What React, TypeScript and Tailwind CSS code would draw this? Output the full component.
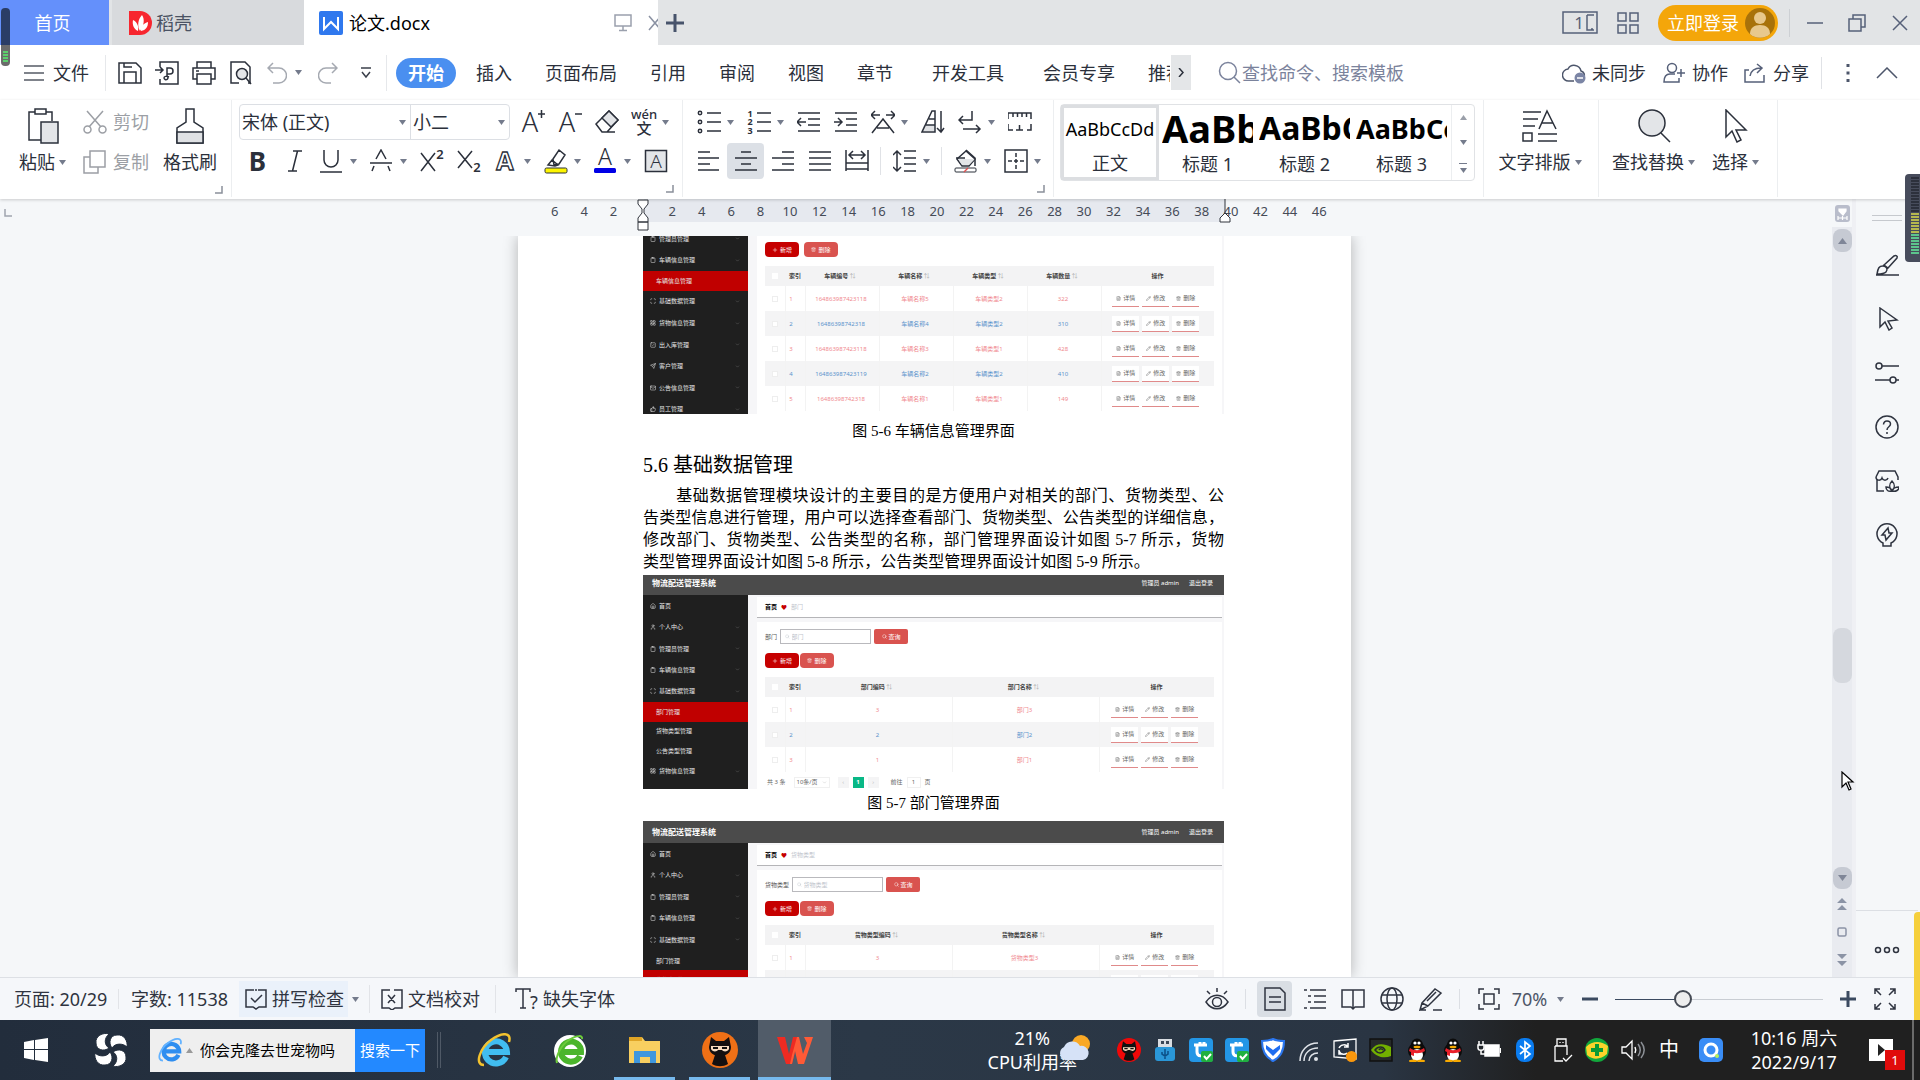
import type { ComponentType, ReactNode } from "react";
import {
  ChevronDown,
  Clipboard,
  FileText,
  Home,
  LayoutGrid,
  Mail,
  Pencil,
  Plus,
  Scan,
  Search,
  Send,
  SquareCheck,
  ThumbsUp,
  Trash2,
  User,
} from "lucide-react";

const UI_FONT = "font-['Noto_Sans','Noto_Sans_CJK_SC',sans-serif]";
const DOC_FONT = "font-['Liberation_Serif','Noto_Sans_CJK_SC',serif]";

/** Line-drawing wrapper: the view box always equals the drawn size. */
function Svg({
  w = 24,
  h = 24,
  className,
  children,
}: {
  w?: number;
  h?: number;
  className?: string;
  children: ReactNode;
}) {
  return (
    <svg
      viewBox={`0 0 ${w} ${h}`}
      width={w}
      height={h}
      fill="none"
      stroke="currentColor"
      strokeWidth={1.5}
      className={`shrink-0 ${className ?? ""}`}
      aria-hidden="true"
    >
      {children}
    </svg>
  );
}

function Caret({ className = "text-[#747b8c]" }: { className?: string }) {
  return (
    <Svg w={7} h={5} className={className}>
      <path d="M0 0h7L3.500 5z" fill="currentColor" stroke="none" />
    </Svg>
  );
}

/** Letter used as part of an icon. */
function Glyph({
  x,
  y,
  size = 24,
  weight = 300,
  children,
}: {
  x: number;
  y: number;
  size?: number;
  weight?: number;
  children: string;
}) {
  return (
    <text
      x={x}
      y={y}
      fontSize={size}
      fontWeight={weight}
      textAnchor="middle"
      fill="currentColor"
      stroke="none"
    >
      {children}
    </text>
  );
}

function Tool({
  label,
  menu,
  active,
  children,
}: {
  label: string;
  menu?: boolean;
  active?: boolean;
  children: ReactNode;
}) {
  return (
    <button type="button" aria-label={label} className="flex h-9 shrink-0 items-center">
      <span
        className={`flex h-9 w-[37px] items-center justify-center rounded-sm ${active ? "bg-[#dce0e6]" : ""}`}
      >
        {children}
      </span>
      {menu && (
        <span className="flex w-[13px]">
          <Caret />
        </span>
      )}
    </button>
  );
}

function Corner() {
  return (
    <div className="flex h-[14px] items-end justify-end pr-2 text-[#8a909b]">
      <Svg w={8} h={8}>
        <path d="M7 0v7H0" />
      </Svg>
    </div>
  );
}

/* ------------------------------------------------------------------ */
/* Window tabs                                                          */
/* ------------------------------------------------------------------ */

function TabBar() {
  return (
    <header className="flex h-[45px] shrink-0 bg-[#e2e4e6] text-lg">
      <button type="button" className="w-[109px] bg-[#6490fb] pr-1 text-white">
        首页
      </button>
      <button
        type="button"
        className="ml-[3px] flex w-[192px] items-center gap-1 bg-[#d8dadd] pl-[17px] text-[#4a5263]"
      >
        <Svg w={23} h={24}>
          <path d="M0 0h11a12 12 0 0 1 0 24H0z" fill="#f7262f" stroke="none" />
          <path
            d="M11 20C8 15 9 8 13 4c3 4 2 11-2 16zM9 20C5 18 3 14 4 9c4 2 6 6 5 11zM12 20c0-5 3-8 7-9 0 5-2 8-7 9z"
            fill="#fff"
            stroke="none"
          />
        </Svg>
        稻壳
      </button>
      <div className="flex w-[354px] items-center overflow-hidden bg-white pl-[15px]">
        <Svg w={24} h={24}>
          <rect width="24" height="24" rx="2" fill="#2f78ee" stroke="none" />
          <path d="M5 6v12l7-7 7 7V6" stroke="#fff" strokeWidth="2" />
        </Svg>
        <span className="ml-1.5 text-black">论文.docx</span>
        <Svg w={18} h={18} className="ml-auto text-[#9aa0ad]">
          <path d="M1 1h16v11H1zM9 12v4M5 16.500h8" />
        </Svg>
        <button type="button" aria-label="关闭标签" className="ml-4 w-[10px] overflow-hidden text-[#8b92a3]">
          <Svg w={14} h={16}>
            <path d="M1 1l12 14M13 1L1 15" />
          </Svg>
        </button>
      </div>
      <button type="button" aria-label="新建" className="ml-2 text-[#47536b]">
        <Svg w={18} h={18}>
          <path d="M9 0v18M0 9h18" strokeWidth="3" />
        </Svg>
      </button>
      <div className="ml-auto flex items-center pr-3 text-[#566079]">
        <Svg w={36} h={23}>
          <path d="M1 1h34v21H1zM25 4h7M25 4v15h7M29 18h2" />
          <Glyph x={17} y={18} size={17} weight={400}>
            1
          </Glyph>
        </Svg>
        <Svg w={22} h={22} className="ml-[19px]">
          <path d="M1 1h8v8H1zM13 1h8v8h-8zM1 13h8v8H1zM13 13h8v8h-8z" />
        </Svg>
        <button
          type="button"
          className="ml-[19px] flex h-9 items-center gap-1.5 rounded-full bg-[#f4a60a] pr-[3px] pl-[9px] text-white"
        >
          立即登录
          <Svg w={30} h={30}>
            <circle cx="15" cy="15" r="15" fill="#a8720a" stroke="none" />
            <circle cx="15" cy="10" r="6" fill="#e8c88c" stroke="none" />
            <path d="M5 26c0-6 4-9 10-9s10 3 10 9c-5 5-15 5-20 0z" fill="#e8c88c" stroke="none" />
          </Svg>
        </button>
        <span className="ml-[11px] h-7 w-px bg-[#cdd0d4]" />
        <button type="button" aria-label="最小化" className="ml-[17px]">
          <Svg w={16} h={18}>
            <path d="M0 9h16" />
          </Svg>
        </button>
        <button type="button" aria-label="还原" className="ml-[25px]">
          <Svg w={18} h={18}>
            <path d="M1 5h12v12H1zM5 5V1h12v12h-4" />
          </Svg>
        </button>
        <button type="button" aria-label="关闭" className="ml-[26px]">
          <Svg w={16} h={16}>
            <path d="M1 1l14 14M15 1L1 15" />
          </Svg>
        </button>
      </div>
    </header>
  );
}

/* ------------------------------------------------------------------ */
/* Menu row                                                             */
/* ------------------------------------------------------------------ */

const MENUS = ["插入", "页面布局", "引用", "审阅", "视图", "章节", "开发工具", "会员专享"];

function MenuRow() {
  return (
    <nav className="flex h-[55px] shrink-0 items-center bg-white text-lg text-[#2b303b]">
      <button type="button" className="flex items-center gap-[9px] pl-6">
        <Svg w={20} h={16} className="text-[#555b66]">
          <path d="M0 1h20M0 8h20M0 15h20" />
        </Svg>
        文件
      </button>
      <span className="ml-4 h-9 w-px bg-[#e6e8eb]" />
      <div className="ml-3 flex items-center gap-[13px]">
        <button type="button" aria-label="保存">
          <Svg>
            <path d="M1 2h17l5 5v15H1zM6 22V11h12v11M6 2v4h8" />
          </Svg>
        </button>
        <button type="button" aria-label="输出为PDF">
          <Svg>
            <path d="M5 6V1h18v22H5v-5M0 9h8M5 6l3 3-3 3" />
            <path d="M12 7h3a3 3 0 0 1 0 6h-3zM12 13v2a2 2 0 1 1-3 2c0-2 3-2 5-1" />
          </Svg>
        </button>
        <button type="button" aria-label="打印">
          <Svg>
            <path d="M5 7V1h14v6M5 18H1V7h22v11h-4M5 13h14v10H5z" />
            <path d="M4 10h3" />
          </Svg>
        </button>
        <button type="button" aria-label="打印预览">
          <Svg>
            <path d="M10 22H2V1h14l5 5v16h-2" />
            <circle cx="13" cy="13" r="5.500" fill="#e3e5e8" />
            <path d="M17 17l5 6" />
          </Svg>
        </button>
      </div>
      <div className="ml-3.5 flex items-center text-[#a5a9b1]">
        <button type="button" aria-label="撤销">
          <Svg w={20} h={22}>
            <path d="M6 1L1 6l5 5M1 6h11a7 7 0 0 1 0 15H6" />
          </Svg>
        </button>
        <span className="ml-2">
          <Caret />
        </span>
        <button type="button" aria-label="恢复" className="ml-4">
          <Svg w={20} h={22}>
            <path d="M14 1l5 5-5 5M19 6H8a7 7 0 0 0 0 15h5" />
          </Svg>
        </button>
        <Svg w={12} h={12} className="ml-[22px] text-[#3b404b]">
          <path d="M1 1h10M2 5l4 5 4-5" />
        </Svg>
      </div>
      <span className="ml-3.5 h-9 w-px bg-[#e6e8eb]" />
      <button
        type="button"
        className="ml-[9px] h-[30px] w-[60px] rounded-full bg-[#4a8ff0] text-lg leading-none font-bold text-white"
      >
        开始
      </button>
      <div className="ml-5 flex items-center gap-[33px]">
        {MENUS.map((m) => (
          <button key={m} type="button" className={m === "开发工具" ? "mx-1.5" : undefined}>
            {m}
          </button>
        ))}
        <button type="button" className="w-[22px] overflow-hidden text-left whitespace-nowrap">
          推荐
        </button>
      </div>
      <button
        type="button"
        aria-label="更多选项卡"
        className="ml-px flex h-[35px] w-5 items-center justify-center bg-[#e4e6e8]"
      >
        <Svg w={6} h={9}>
          <path d="M1 0l4 4.500L1 9" />
        </Svg>
      </button>
      <label className="ml-[27px] flex items-center text-[#7b839c]">
        <Svg w={24} h={24}>
          <circle cx="10" cy="10" r="8.500" />
          <path d="M16 16l6 6" />
        </Svg>
        <input
          aria-label="查找命令"
          placeholder="查找命令、搜索模板"
          className="w-[200px] bg-transparent outline-none placeholder:text-[#7b839c]"
        />
      </label>
      <div className="ml-auto flex items-center pr-[22px]">
        <button type="button" className="flex items-center gap-1.5">
          <Svg w={24} h={22} className="text-[#4d566b]">
            <path d="M12 19H7a6 6 0 0 1-1-12 7 7 0 0 1 13 2c3 1 4 3 3 6" />
            <circle cx="18" cy="16" r="5.500" fill="#7b85a5" stroke="none" />
            <path d="M15 16h6" stroke="#fff" />
          </Svg>
          未同步
        </button>
        <button type="button" className="ml-[17px] flex items-center gap-[7px]">
          <Svg w={22} h={22} className="text-[#566079]">
            <circle cx="9" cy="6" r="4.500" />
            <path d="M12 12H7c-4 0-6 3-6 8h15v-4M18 7v8M14 11h8" />
          </Svg>
          协作
        </button>
        <button type="button" className="ml-4 flex items-center gap-1.5">
          <Svg w={23} h={20} className="text-[#566079]">
            <path d="M5 7H1v12h19v-7M6 13c1-6 5-8 11-8M13 1l5 4-5 5" />
          </Svg>
          分享
        </button>
        <span className="ml-3 h-8 w-px bg-[#e0e2e6]" />
        <Svg w={4} h={20} className="ml-6 text-[#4d566b]">
          <path d="M2 1v3M2 8.500v3M2 16v3" strokeWidth="3" />
        </Svg>
        <button type="button" aria-label="收起功能区" className="ml-[26px] text-[#4d566b]">
          <Svg w={22} h={12}>
            <path d="M1 11L11 1l10 10" />
          </Svg>
        </button>
      </div>
    </nav>
  );
}

/* ------------------------------------------------------------------ */
/* Ribbon                                                               */
/* ------------------------------------------------------------------ */

function ClipboardGroup() {
  return (
    <section className="w-[232px] border-r border-[#eceef0]">
      <div className="flex h-20 pt-2 pl-[19px]">
        <button type="button" className="flex flex-col items-center gap-1">
          <Svg w={36} h={36}>
            <path d="M20 32H4V4h6M21 4h6v9M10 1h11v5H10z" />
            <path d="M16 14h17v21H16z" fill="#e3e5e8" />
          </Svg>
          <span className="flex items-center gap-1 leading-7">
            粘贴
            <Caret />
          </span>
        </button>
        <div className="ml-[17px] flex flex-col gap-3 text-[#9c9fa5]">
          <button type="button" className="flex h-7 items-center gap-1.5">
            <Svg w={24} h={24}>
              <path d="M4 1l14 16M20 1L6 17" />
              <circle cx="4.500" cy="19.500" r="3.500" />
              <circle cx="19.500" cy="19.500" r="3.500" />
            </Svg>
            剪切
          </button>
          <button type="button" className="flex h-7 items-center gap-1.5">
            <Svg w={24} h={24}>
              <path d="M7 1h15v16H7z" />
              <path d="M7 7H1v16h14v-6" />
            </Svg>
            复制
          </button>
        </div>
        <button type="button" className="ml-[14px] flex flex-col items-center gap-1">
          <Svg w={28} h={36}>
            <path d="M10 1h8v13l9 6v15H1V20l9-6z" />
            <path d="M1 24h26v11H1z" fill="#dfe1e4" />
          </Svg>
          <span className="leading-7">格式刷</span>
        </button>
      </div>
      <Corner />
    </section>
  );
}

function FontGroup() {
  return (
    <section className="w-[451px] border-r border-[#eceef0] pt-1 pl-[7px]">
      <div className="flex">
        <div className="flex h-9 rounded-sm border border-[#dcdfe4]">
          <label className="flex w-[171px] items-center border-r border-[#dcdfe4] pr-1">
            <select aria-label="字体" className="w-full appearance-none bg-transparent pl-0.5 outline-none">
              <option>宋体 (正文)</option>
            </select>
            <Caret />
          </label>
          <label className="flex w-[98px] items-center pr-1">
            <select aria-label="字号" className="w-full appearance-none bg-transparent pl-0.5 outline-none">
              <option>小二</option>
            </select>
            <Caret />
          </label>
        </div>
        <div className="ml-1 flex">
          <Tool label="增大字号">
            <Svg>
              <Glyph x={9} y={22} size={27}>
                A
              </Glyph>
              <path d="M17 4h7M20.500 0v8" />
            </Svg>
          </Tool>
          <Tool label="减小字号">
            <Svg>
              <Glyph x={9} y={22} size={27}>
                A
              </Glyph>
              <path d="M17 4h7" />
            </Svg>
          </Tool>
          <Tool label="清除格式">
            <Svg>
              <path d="M1 14L14 1l9 9-11 12H7zM7 22h13" />
              <path d="M7 8l7-7 9 9-7 7z" fill="#e3e5e8" />
            </Svg>
          </Tool>
          <Tool label="拼音指南" menu>
            <Svg w={26} h={28}>
              <Glyph x={13} y={11} size={13} weight={500}>
                wén
              </Glyph>
              <Glyph x={13} y={26} size={15} weight={500}>
                文
              </Glyph>
            </Svg>
          </Tool>
        </div>
      </div>
      <div className="mt-[3px] flex">
        <Tool label="加粗">
          <span className="text-[26px] leading-none font-bold">B</span>
        </Tool>
        <Tool label="倾斜">
          <Svg>
            <path d="M10 2h9M5 22h9M14.500 2l-5 20" />
          </Svg>
        </Tool>
        <Tool label="下划线" menu>
          <Svg>
            <path d="M4 1v10a7 7 0 0 0 14 0V1M0 23h22" />
          </Svg>
        </Tool>
        <Tool label="删除线" menu>
          <Svg>
            <path d="M6 10l5-9 5 9M0 14h22M4 17l-2 5M18 17l2 5" />
          </Svg>
        </Tool>
        <Tool label="上标">
          <Svg>
            <path d="M1 4l14 18M15 4L1 22" />
            <Glyph x={20} y={10} size={13} weight={600}>
              2
            </Glyph>
          </Svg>
        </Tool>
        <Tool label="下标">
          <Svg>
            <path d="M1 2l14 17M15 2L1 19" />
            <Glyph x={20} y={23} size={13} weight={600}>
              2
            </Glyph>
          </Svg>
        </Tool>
        <Tool label="文字效果" menu>
          <Svg>
            <text x="11" y="21" fontSize="25" fontWeight="700" textAnchor="middle" fill="#fff" strokeWidth="1.300">
              A
            </text>
          </Svg>
        </Tool>
        <Tool label="突出显示" menu>
          <Svg w={24} h={26}>
            <path d="M9 11l6-9 6 5-6 9-5 1zM8 12l6 5M4 17l4-5 6 5-3 1z" />
            <rect x="1" y="20" width="22" height="5" rx="1.500" fill="#fdf500" strokeWidth="1" />
          </Svg>
        </Tool>
        <Tool label="字体颜色" menu>
          <Svg w={24} h={26}>
            <Glyph x={11} y={17} size={23}>
              A
            </Glyph>
            <rect x="0" y="20" width="22" height="5" rx="1.500" fill="#0000e6" stroke="none" />
          </Svg>
        </Tool>
        <Tool label="字符底纹">
          <Svg>
            <path d="M1.500 1.500h21v21h-21z" fill="#e3e5e8" />
            <Glyph x={12} y={19} size={19}>
              A
            </Glyph>
          </Svg>
        </Tool>
      </div>
      <Corner />
    </section>
  );
}

function ParagraphGroup() {
  return (
    <section className="w-[371px] border-r border-[#eceef0] pt-1 pl-[7px]">
      <div className="flex">
        <Tool label="项目符号" menu>
          <Svg>
            <path d="M10 3h14M10 12h14M10 21h14" />
            <circle cx="3" cy="3" r="1.700" />
            <circle cx="3" cy="12" r="1.700" />
            <circle cx="3" cy="21" r="1.700" />
          </Svg>
        </Tool>
        <Tool label="编号" menu>
          <Svg>
            <path d="M10 3h14M10 12h14M10 21h14" />
            <Glyph x={3} y={7} size={9} weight={700}>
              1
            </Glyph>
            <Glyph x={3} y={15} size={9} weight={700}>
              2
            </Glyph>
            <Glyph x={3} y={24} size={9} weight={700}>
              3
            </Glyph>
          </Svg>
        </Tool>
        <Tool label="减少缩进量">
          <Svg>
            <path d="M1 3h22M11 9h12M11 15h12M1 21h22M0 12h9M4 8l-4 4 4 4" />
          </Svg>
        </Tool>
        <Tool label="增加缩进量">
          <Svg>
            <path d="M1 3h22M12 9h11M12 15h11M1 21h22M0 12h8M4 8l4 4-4 4" />
          </Svg>
        </Tool>
        <Tool label="中文版式" menu>
          <Svg>
            <path d="M0 5h9M4 1L0 5l4 4M15 5h9M20 1l4 4-4 4M1 23L12 9l11 14M6 18h12" />
          </Svg>
        </Tool>
        <Tool label="排序">
          <Svg>
            <path d="M3 15h11v6H1z" fill="#dfe1e4" stroke="none" />
            <path d="M11 1h3v21H1zM8 9h6M5 15h9M20 1v21M16 18l4 4 3-4" />
          </Svg>
        </Tool>
        <Tool label="显示段落标记" menu>
          <Svg>
            <path d="M14 1v9H1M5 6l-4 4 4 4M5 19h17M18 15l4 4-4 4" />
          </Svg>
        </Tool>
        <Tool label="制表位">
          <Svg>
            <path d="M0 9V3h23v6M5 3v4M9.500 3v4M14 3v4M18.500 3v4M0 14v6h5M23 14v6h-4M8 20h7M11.500 15v5" />
          </Svg>
        </Tool>
      </div>
      <div className="mt-[3px] flex items-center">
        <Tool label="左对齐">
          <Svg w={22} h={22}>
            <path d="M0 2h12M0 8h21M0 14h12M0 20h21" />
          </Svg>
        </Tool>
        <Tool label="居中对齐" active>
          <Svg w={22} h={22}>
            <path d="M6 2h10M0 8h22M6 14h10M0 20h22" />
          </Svg>
        </Tool>
        <Tool label="右对齐">
          <Svg w={22} h={22}>
            <path d="M10 2h12M0 8h22M10 14h12M0 20h22" />
          </Svg>
        </Tool>
        <Tool label="两端对齐">
          <Svg w={22} h={22}>
            <path d="M0 2h22M0 8h22M0 14h22M0 20h22" />
          </Svg>
        </Tool>
        <Tool label="分散对齐">
          <Svg>
            <path d="M1 1v21M23 1v21M4 6h16M8 2L4 6l4 4M16 2l4 4-4 4M1 14h22M1 20h22" />
          </Svg>
        </Tool>
        <span className="mx-[5px] h-7 w-px bg-[#e0e2e6]" />
        <Tool label="行距" menu>
          <Svg>
            <path d="M4 2v20M0 6l4-4 4 4M0 18l4 4 4-4M11 2h12M11 9h12M11 15h12M11 22h12" />
          </Svg>
        </Tool>
        <span className="mx-[5px] h-7 w-px bg-[#e0e2e6]" />
        <Tool label="底纹颜色" menu>
          <Svg>
            <path d="M3 10l9-8 9 8-6 7H8z" />
            <path d="M4 10h17l-6 6H8z" fill="#e3e5e8" stroke="none" />
            <path d="M2 9h9M12 1l9 8v8" />
            <rect x="1" y="19" width="21" height="4" rx="1" strokeWidth="1" />
            <path d="M10 23l4-4" stroke="#e05050" />
          </Svg>
        </Tool>
        <Tool label="边框" menu>
          <Svg>
            <path d="M1 1h22v22H1z" />
            <path d="M12 4v16M4 12h16" strokeDasharray="4 2" />
          </Svg>
        </Tool>
      </div>
      <Corner />
    </section>
  );
}

const STYLES = [
  { name: "标题 1", sample: "text-[38px]" },
  { name: "标题 2", sample: "text-[32px]" },
  { name: "标题 3", sample: "text-[27px]" },
];

function StylesGroup() {
  return (
    <section className="w-[430px] border-r border-[#eceef0] pt-1 pl-1.5">
      <div className="flex h-[77px] w-[415px] rounded-sm border border-[#e0e2e5]">
        <button
          type="button"
          className="flex w-[98px] shrink-0 flex-col items-center justify-between overflow-hidden border-[3px] border-[#dcdee1]"
        >
          <span className="flex h-11 items-center text-[18px] leading-none text-black">AaBbCcDd</span>
          <span className="leading-7">正文</span>
        </button>
        {STYLES.map((s) => (
          <button
            key={s.name}
            type="button"
            className="flex w-[97px] shrink-0 flex-col items-center overflow-hidden px-[3px] pt-px"
          >
            <span
              className={`flex h-11 w-full items-center overflow-hidden leading-none font-bold text-black ${s.sample}`}
            >
              AaBbCc
            </span>
            <span className="leading-7">{s.name}</span>
          </button>
        ))}
        <div className="ml-auto flex w-[23px] shrink-0 flex-col items-center border-l border-[#eceef0]">
          <button type="button" aria-label="上一行" className="flex flex-1 items-center">
            <Caret className="rotate-180 text-[#9a9fa9]" />
          </button>
          <button type="button" aria-label="下一行" className="flex flex-1 items-center">
            <Caret />
          </button>
          <button type="button" aria-label="其他样式" className="flex flex-1 flex-col items-center justify-center gap-1">
            <span className="h-px w-2 bg-[#747b8c]" />
            <Caret />
          </button>
        </div>
      </div>
    </section>
  );
}

function BigTool({ label, icon }: { label: string; icon: ReactNode }) {
  return (
    <button type="button" className="flex flex-col items-center gap-1">
      <span className="flex h-9 items-center">{icon}</span>
      <span className="flex items-center gap-1 leading-7">
        {label}
        <Caret />
      </span>
    </button>
  );
}

function Ribbon() {
  return (
    <div className="relative z-10 flex h-[99px] shrink-0 bg-white pb-0.5 text-lg text-[#2b303b] shadow-[0_1px_3px_rgba(0,0,0,0.18)]">
      <ClipboardGroup />
      <FontGroup />
      <ParagraphGroup />
      <StylesGroup />
      <section className="flex w-[115px] items-start justify-center border-r border-[#eceef0] pt-2 pr-0.5">
        <BigTool
          label="文字排版"
          icon={
            <Svg w={36} h={34}>
              <path d="M1 3h18M1 10h15M1 17h12M1 24h9v8H1zM16 25h19M16 32h19" />
              <path d="M17 20l8-18 9 18M20 14h11" />
            </Svg>
          }
        />
      </section>
      <section className="flex w-[179px] items-start gap-[17px] border-r border-[#eceef0] pt-2 pl-[13px]">
        <BigTool
          label="查找替换"
          icon={
            <Svg w={34} h={34}>
              <circle cx="15" cy="14" r="13" fill="#e3e5e8" />
              <path d="M24 24l9 9" />
            </Svg>
          }
        />
        <BigTool
          label="选择"
          icon={
            <Svg w={24} h={34}>
              <path d="M2 1v27l6-6 5 11 4-2-5-10h10z" />
            </Svg>
          }
        />
      </section>
    </div>
  );
}

/* ------------------------------------------------------------------ */
/* Ruler                                                                */
/* ------------------------------------------------------------------ */

const TICKS = Array.from({ length: 27 }, (_, i) => (i - 3) * 2);

function Ruler() {
  return (
    <div className="flex h-[37px] shrink-0 text-[13px] leading-[25px] text-[#454b57]">
      <Svg w={8} h={8} className="mt-[10px] ml-1 text-[#a0a5af]">
        <path d="M1 0v7h7" />
      </Svg>
      <div className="grid flex-1 justify-center pl-[30px]">
        <div className="col-start-1 row-start-1 ml-[104px] h-[23px] w-[581px] bg-[#e6e9ef]" />
        <div className="col-start-1 row-start-1 flex w-[794px]">
          {TICKS.map((t) => (
            <span key={t} className="flex flex-1 justify-center">
              {t === 0 ? (
                <Svg w={12} h={32} className="text-[#30343d]">
                  <path
                    d="M1 1h10v4l-4 5v4l4 5v4H1v-4l4-5v-4L1 5zM1 23h10v8H1z"
                    fill="#fff"
                    strokeWidth="1"
                  />
                </Svg>
              ) : (
                <span>{Math.abs(t)}</span>
              )}
            </span>
          ))}
        </div>
        <div className="col-start-1 row-start-1 ml-[679px] w-3">
          <Svg w={12} h={24} className="text-[#30343d]">
            <path d="M6 0v14M1 23v-4l5-5 5 5v4z" fill="#fff" strokeWidth="1" />
          </Svg>
        </div>
      </div>
    </div>
  );
}

/* ------------------------------------------------------------------ */
/* Figures in the document: logistics admin panels                      */
/* ------------------------------------------------------------------ */

type IconType = ComponentType<{ size?: number; className?: string }>;
type SideItem = { label: string; icon?: IconType; active?: boolean };

function SideMenu({ items, className }: { items: SideItem[]; className: string }) {
  return (
    <div className={`flex w-full flex-col text-[#e6e6e6] ${className}`}>
      {items.map(({ label, icon: Icon, active }) => (
        <div
          key={label + (active ? "-on" : "")}
          className={`flex items-center gap-[3px] pr-2 ${Icon ? "flex-[22] pl-[7px]" : "flex-[20] pl-[13px]"} ${
            active ? "bg-[#c00000]" : ""
          }`}
        >
          {Icon && <Icon size={6} />}
          <span>{label}</span>
          {Icon && label !== "首页" && <ChevronDown size={5} className="ml-auto text-[#777]" />}
        </div>
      ))}
    </div>
  );
}

function MiniButtons({ gap }: { gap: string }) {
  return (
    <div className={`flex ${gap} text-white`}>
      <button
        type="button"
        className="flex h-[15px] w-[34px] items-center justify-center gap-0.5 rounded bg-[#c60000]"
      >
        <Plus size={6} />
        新增
      </button>
      <button
        type="button"
        className="flex h-[15px] w-[34px] items-center justify-center gap-0.5 rounded bg-[#d9534f]"
      >
        <Trash2 size={5} />
        删除
      </button>
    </div>
  );
}

function MiniTable({ heads, rows, cols }: { heads: string[]; rows: string[][]; cols: string }) {
  return (
    <table className="mt-[9px] w-full table-fixed border-collapse text-center">
      <thead>
        <tr className="h-5 bg-[#f3f3f4] text-[#444]">
          <th className="w-5 p-0">
            <input
              type="checkbox"
              aria-label="全选"
              className="mx-auto block size-1.5 appearance-none bg-white"
            />
          </th>
          <th className="w-5 p-0">索引</th>
          {heads.map((h) => (
            <th key={h} className={`${cols} p-0 pr-1`}>
              {h} <span className="font-normal text-[#aaa]">⇅</span>
            </th>
          ))}
          <th className="p-0">操作</th>
        </tr>
      </thead>
      <tbody>
        {rows.map((row, i) => (
          <tr
            key={row.join()}
            className={`h-[25px] ${i % 2 ? "bg-[#f4f4f5] text-[#5b93cc]" : "bg-white text-[#f08a90]"}`}
          >
            <td className="p-0">
              <input
                type="checkbox"
                aria-label={`选择 ${row[0]}`}
                className="mx-auto block size-1.5 appearance-none border border-[#eee] bg-white"
              />
            </td>
            {row.map((cell, c) => (
              <td key={c} className={`border-x border-[#f3f3f3] p-0 ${c ? "pr-0.5" : "pr-2"}`}>
                {cell}
              </td>
            ))}
            <td className="p-0">
              <div className="flex justify-center gap-[3px] pr-1 text-[#666]">
                <button type="button" className="flex h-4 w-[27px] items-center justify-center gap-0.5 border-b border-[#e08a8a] bg-white">
                  <FileText size={5} />
                  详情
                </button>
                <button type="button" className="flex h-4 w-[27px] items-center justify-center gap-0.5 border-b border-[#e08a8a] bg-white">
                  <Pencil size={5} />
                  修改
                </button>
                <button type="button" className="flex h-4 w-[27px] items-center justify-center gap-0.5 border-b border-[#e08a8a] bg-white">
                  <Trash2 size={5} />
                  删除
                </button>
              </div>
            </td>
          </tr>
        ))}
      </tbody>
    </table>
  );
}

function AdminPanel({
  topic,
  menu,
  menuClass,
  headClass,
  className,
  inputId,
  children,
}: {
  topic: string;
  menu: SideItem[];
  menuClass: string;
  headClass: string;
  className: string;
  inputId: string;
  children: ReactNode;
}) {
  return (
    <div className={`flex flex-col overflow-hidden text-[6px] leading-none ${UI_FONT} ${className}`}>
      <div className={`flex shrink-0 items-center bg-[#4b4b4b] pr-[11px] pl-[9px] text-white ${headClass}`}>
        <span className="text-[8px] font-bold">物流配送管理系统</span>
        <span className="ml-auto">管理员 admin</span>
        <span className="ml-2.5">退出登录</span>
      </div>
      <div className="flex min-h-0 flex-1">
        <div className="w-[105px] shrink-0 overflow-hidden bg-[#1f1f1f]">
          <SideMenu items={menu} className={menuClass} />
        </div>
        <div className="flex flex-1 flex-col overflow-hidden bg-[#f6f6f8] pt-[2px] pr-[2px] pl-[9px]">
          <div className="flex h-[21px] shrink-0 items-center gap-1 border-b border-[#b5b5b8] bg-white px-2">
            <b>首页</b>
            <span className="text-[#c60000]">♥</span>
            <span className="text-[#c0c4cc]">{topic}</span>
          </div>
          <div className="mt-1 flex-1 bg-white px-2 pt-[7px]">
            <div className="mb-[9px] flex items-center gap-[3px]">
              <label htmlFor={inputId} className="text-[#555]">
                {topic}
              </label>
              <span className="flex h-[15px] w-[91px] items-center gap-0.5 border border-[#b9b9bd] px-1 text-[#c0c4cc]">
                <Search size={5} />
                <input
                  id={inputId}
                  placeholder={topic}
                  className="w-full bg-transparent outline-none placeholder:text-[#c0c4cc]"
                />
              </span>
              <button
                type="button"
                className="flex h-[15px] w-[34px] items-center justify-center gap-0.5 rounded-xs bg-[#d9534f] text-white"
              >
                <Search size={5} />
                查询
              </button>
            </div>
            <MiniButtons gap="gap-px" />
            {children}
          </div>
        </div>
      </div>
    </div>
  );
}

const VEHICLE_MENU: SideItem[] = [
  { label: "管理员管理", icon: Clipboard },
  { label: "车辆信息管理", icon: Clipboard },
  { label: "车辆信息管理", active: true },
  { label: "基础数据管理", icon: Scan },
  { label: "货物信息管理", icon: LayoutGrid },
  { label: "出入库管理", icon: SquareCheck },
  { label: "客户管理", icon: Send },
  { label: "公告信息管理", icon: Mail },
  { label: "员工管理", icon: ThumbsUp },
];

const BASE_MENU: SideItem[] = [
  { label: "首页", icon: Home },
  { label: "个人中心", icon: User },
  { label: "管理员管理", icon: Clipboard },
  { label: "车辆信息管理", icon: Clipboard },
  { label: "基础数据管理", icon: Scan },
];

const DEPT_MENU: SideItem[] = [
  ...BASE_MENU,
  { label: "部门管理", active: true },
  { label: "货物类型管理" },
  { label: "公告类型管理" },
  { label: "货物信息管理", icon: LayoutGrid },
];

const GOODS_MENU: SideItem[] = [
  ...BASE_MENU,
  { label: "部门管理" },
  { label: "货物类型管理", active: true },
  { label: "公告类型管理" },
  { label: "货物信息管理", icon: LayoutGrid },
];

function VehicleFigure() {
  return (
    <div className={`flex h-[178px] shrink-0 overflow-hidden text-[6px] leading-none ${UI_FONT}`}>
      <div className="flex w-[105px] shrink-0 flex-col bg-[#1f1f1f]">
        <SideMenu items={VEHICLE_MENU} className="-mt-2 h-[192px] shrink-0" />
      </div>
      <div className="flex-1 bg-[#f6f6f8] pr-[2px] pl-[9px]">
        <div className="h-full bg-white px-2 pt-1.5">
          <MiniButtons gap="gap-[5px]" />
          <MiniTable
            cols="w-[74px]"
            heads={["车辆编号", "车辆名称", "车辆类型", "车辆数量"]}
            rows={[
              ["1", "164863987423118", "车辆名称5", "车辆类型2", "322"],
              ["2", "16486398742318", "车辆名称4", "车辆类型2", "310"],
              ["3", "164863987423118", "车辆名称3", "车辆类型1", "428"],
              ["4", "164863987423119", "车辆名称2", "车辆类型2", "410"],
              ["5", "16486398742318", "车辆名称1", "车辆类型1", "149"],
            ]}
          />
        </div>
      </div>
    </div>
  );
}

function Pagination() {
  return (
    <div className="mt-1 flex h-3 items-center pl-0.5 text-[#666]">
      <span>共 3 条</span>
      <span className="ml-2 flex h-[11px] w-9 items-center justify-center gap-1 border border-[#f0f0f0]">
        10条/页
        <ChevronDown size={5} className="text-[#bbb]" />
      </span>
      <button type="button" aria-label="上一页" className="ml-2 size-[11px] bg-[#f4f4f5] text-[#bbb]">
        ‹
      </button>
      <button type="button" className="ml-1 size-[11px] bg-[#09b886] font-bold text-white">
        1
      </button>
      <button type="button" aria-label="下一页" className="ml-1 size-[11px] bg-[#f4f4f5] text-[#bbb]">
        ›
      </button>
      <span className="ml-3">前往</span>
      <span className="mx-1 flex h-[11px] w-3.5 items-center justify-center border border-[#f0f0f0]">1</span>
      <span>页</span>
    </div>
  );
}

const LINES = [
  "\u3000\u3000基础数据管理模块设计的主要目的是方便用户对相关的部门、货物类型、公",
  "告类型信息进行管理，用户可以选择查看部门、货物类型、公告类型的详细信息，",
  "修改部门、货物类型、公告类型的名称，部门管理界面设计如图 5-7 所示，货物",
];

function Page() {
  return (
    <article
      className={`w-[833px] shrink-0 overflow-hidden bg-white pr-[127px] pl-[125px] text-black shadow-[0_0_14px_rgba(0,0,0,0.28)] ${DOC_FONT}`}
    >
      <VehicleFigure />
      <p className="text-center text-[15px] leading-[34px]">图 5-6 车辆信息管理界面</p>
      <h2 className="text-xl leading-[34px]">5.6 基础数据管理</h2>
      <p className="mt-[3px] mb-0.5 text-base leading-[22px]">
        {LINES.map((l) => (
          <span key={l} className="block whitespace-nowrap [text-align-last:justify]">
            {l}
          </span>
        ))}
        <span className="block">类型管理界面设计如图 5-8 所示，公告类型管理界面设计如图 5-9 所示。</span>
      </p>
      <AdminPanel
        topic="部门"
        inputId="dept"
        menu={DEPT_MENU}
        menuClass="h-[187px]"
        headClass="h-5 pb-1"
        className="h-[214px]"
      >
        <MiniTable
          cols="w-[147px]"
          heads={["部门编码", "部门名称"]}
          rows={[
            ["1", "3", "部门3"],
            ["2", "2", "部门2"],
            ["3", "1", "部门1"],
          ]}
        />
        <Pagination />
      </AdminPanel>
      <p className="text-center text-[15px] leading-7">图 5-7 部门管理界面</p>
      <AdminPanel
        topic="货物类型"
        inputId="goods"
        menu={GOODS_MENU}
        menuClass="h-[188px]"
        headClass="h-[22px]"
        className="mt-1 h-[214px]"
      >
        <MiniTable
          cols="w-[147px]"
          heads={["货物类型编码", "货物类型名称"]}
          rows={[
            ["1", "3", "货物类型3"],
            ["2", "2", "货物类型2"],
          ]}
        />
      </AdminPanel>
    </article>
  );
}

/* ------------------------------------------------------------------ */
/* Scroll bar and side rail                                             */
/* ------------------------------------------------------------------ */

function ScrollBar() {
  return (
    <div className="flex w-6 shrink-0 flex-col items-center border-r-4 border-[#eff0f4] bg-[#e9ebf0] text-[#7f8697]">
      <div className="flex h-7 w-full shrink-0 items-center justify-center bg-[#f5f7f9]">
        <Svg w={15} h={17}>
          <rect width="15" height="17" rx="3" fill="#b9bdcb" stroke="none" />
          <path d="M4 4h7v2l-3 4-4-4zM3 13h9M3 11v4M12 11v4M7.500 11v4" fill="#fff" stroke="#fff" strokeWidth="1.200" />
        </Svg>
      </div>
      <button
        type="button"
        aria-label="向上滚动"
        className="mt-0.5 flex h-[23px] w-[19px] shrink-0 items-center justify-center rounded-lg bg-[#c6cad3]"
      >
        <Svg w={9} h={6}>
          <path d="M0 6l4.500-6L9 6z" fill="currentColor" stroke="none" />
        </Svg>
      </button>
      <div className="flex-[375]" />
      <div className="h-[55px] w-[19px] shrink-0 rounded-lg bg-[#d5d8de]" />
      <div className="flex-[184]" />
      <button
        type="button"
        aria-label="向下滚动"
        className="flex h-[22px] w-[19px] shrink-0 items-center justify-center rounded-lg bg-[#c6cad3]"
      >
        <Svg w={9} h={6}>
          <path d="M0 0l4.500 6L9 0z" fill="currentColor" stroke="none" />
        </Svg>
      </button>
      <div className="flex shrink-0 flex-col items-center gap-[17px] pt-[9px] pb-[11px] text-[#8b93a5]">
        <Svg w={10} h={12}>
          <path d="M0 5l5-5 5 5zM0 12l5-5 5 5z" fill="currentColor" stroke="none" />
        </Svg>
        <Svg w={10} h={10}>
          <rect x="1" y="1" width="8" height="8" rx="1.500" />
        </Svg>
        <Svg w={10} h={12}>
          <path d="M0 0l5 5 5-5zM0 7l5 5 5-5z" fill="currentColor" stroke="none" />
        </Svg>
      </div>
    </div>
  );
}

function SideRail() {
  return (
    <aside className="flex w-16 shrink-0 flex-col items-center pr-0.5 text-[#2f3440]">
      <div className="mt-4 h-1.5 w-[30px] border-y border-[#c6c9ce]" />
      <div className="mt-8 flex flex-col items-center gap-[30px]">
        <Svg>
          <path d="M1 22h23M9 12l10-9c2-1 4 0 3 2l-9 10zM2 21c1-6 2-8 6-8s5 4 3 6-4 2-9 2z" />
        </Svg>
        <Svg>
          <path d="M5 1l17 12-9 1 4 7-3 2-4-8-5 5z" />
        </Svg>
        <Svg>
          <circle cx="4" cy="5" r="3" />
          <circle cx="18" cy="19" r="3" />
          <path d="M7 5h17M0 19h15M21 19h3" />
        </Svg>
        <Svg>
          <circle cx="12" cy="12" r="11" />
          <path d="M8.500 9.500c0-5 7-4 7-.5 0 3-3.500 2.500-3.500 6M12 17v2" />
        </Svg>
        <Svg>
          <path d="M2 11v11h7M1 8l3-6h16l3 6v3M1 8c0 4 5 4 6 1 1 3 5 3 6 0" />
          <path d="M17 22c-3-3-3-7 0-10 3 3 3 7 0 10zM17 22c-4 1-6-1-6-4 3 0 5 1 6 4zM17 22c4 1 7-1 7-4-4 0-6 1-7 4z" />
        </Svg>
        <Svg>
          <path d="M8 20a10 10 0 1 1 8 0v3H8z" />
          <path d="M13 5l-6 7h3l1 5 6-7h-3z" />
        </Svg>
      </div>
      <div className="mt-auto flex h-[67px] w-full items-center justify-center border-t border-[#dcdfe4] pt-3">
        <Svg w={26} h={8}>
          <circle cx="4" cy="4" r="2.500" />
          <circle cx="13" cy="4" r="2.500" />
          <circle cx="22" cy="4" r="2.500" />
        </Svg>
      </div>
    </aside>
  );
}

/* ------------------------------------------------------------------ */
/* Status bar                                                           */
/* ------------------------------------------------------------------ */

function StatusBar() {
  return (
    <footer className="flex h-[43px] shrink-0 items-center border-t border-[#dde0e5] bg-[#f5f7fa] text-lg whitespace-nowrap text-[#2f3440]">
      <span className="w-[104px] pl-3.5">页面: 20/29</span>
      <span className="ml-3.5 h-5 w-px bg-[#e2e4e8]" />
      <span className="ml-3 w-[108px]">字数: 11538</span>
      <button type="button" className="flex h-9 items-center gap-[5px] bg-[#eaf1fa] pr-1 pl-1.5">
        <Svg w={22} h={22}>
          <path d="M9 2H1v17h7l3 2 3-2h7V2h-8M11 1v2M6 10l4 4 7-7" />
        </Svg>
        拼写检查
      </button>
      <span className="ml-1">
        <Caret />
      </span>
      <span className="ml-2.5 h-7 w-px bg-[#e2e4e8]" />
      <button type="button" className="ml-[11px] flex items-center gap-[5px]">
        <Svg w={22} h={22}>
          <path d="M9 2H1v18h7l3 2 3-2h7V2h-8M7 7l7 8M14 7l-7 8" />
        </Svg>
        文档校对
      </button>
      <span className="ml-[15px] h-7 w-px bg-[#e2e4e8]" />
      <button type="button" className="ml-[19px] flex items-center gap-1">
        <Svg w={24} h={24}>
          <path d="M1 5V2h14v3M8 2v19M5 21h6" />
          <Glyph x={19} y={22} size={18} weight={400}>
            ?
          </Glyph>
        </Svg>
        缺失字体
      </button>

      <div className="ml-auto flex items-center">
        <Svg w={24} h={24}>
          <path d="M1 15c6-9 16-9 22 0-6 9-16 9-22 0zM12 1v4M2 4l3 3M22 4l-3 3" />
          <circle cx="12" cy="15" r="4.500" />
        </Svg>
        <span className="mr-[11px] ml-4 h-5 w-px bg-[#dcdfe4]" />
        <button type="button" aria-label="页面视图" className="flex h-9 w-[35px] items-center justify-center rounded-sm bg-[#d9dee4]">
          <Svg w={22} h={24}>
            <path d="M1 1h15l5 5v17H1zM5 10h12M5 15h12" />
          </Svg>
        </button>
        <div className="ml-3 flex items-center gap-[15px]">
          <Svg w={22} h={22}>
            <path d="M0 2h3M6 2h16M4 8h3M10 8h12M4 14h3M10 14h12M0 20h3M6 20h16" />
          </Svg>
          <Svg w={24} h={24}>
            <path d="M12 3H1v17h9l2 2 2-2h9V3zM12 3v18" />
          </Svg>
          <Svg w={24} h={24}>
            <circle cx="12" cy="12" r="11" />
            <ellipse cx="12" cy="12" rx="5" ry="11" />
            <path d="M2 8h20M2 16h20" />
          </Svg>
          <Svg w={24} h={24}>
            <path d="M1 23l2-7L16 2l6 4L9 19zM3 16l6 3M8 14l9-9M13 15l9-9M14 23h9M1 23h6" />
          </Svg>
        </div>
        <span className="ml-4 h-5 w-px bg-[#dcdfe4]" />
        <Svg w={22} h={22} className="ml-[18px]">
          <path d="M1 6V1h5M16 1h5v5M21 16v5h-5M6 21H1v-5M6 6h10v10H6z" />
        </Svg>
        <button type="button" className="ml-[11px] flex items-center gap-[9px] text-[#4d5668]">
          <span className="w-[37px]">70%</span>
          <Caret />
        </button>
        <button type="button" aria-label="缩小" className="ml-[18px] text-[#3b4a60]">
          <Svg w={16} h={16}>
            <path d="M0 8h16" strokeWidth="3" />
          </Svg>
        </button>
        <input
          type="range"
          aria-label="缩放"
          min={0}
          max={100}
          defaultValue={31}
          className="mx-[17px] h-5 w-[208px] appearance-none bg-[linear-gradient(to_right,#3b4a60_33%,#c9cdd3_33%)] bg-[length:100%_1px] bg-center bg-no-repeat [&::-webkit-slider-thumb]:size-[18px] [&::-webkit-slider-thumb]:appearance-none [&::-webkit-slider-thumb]:rounded-full [&::-webkit-slider-thumb]:border-2 [&::-webkit-slider-thumb]:border-[#454a54] [&::-webkit-slider-thumb]:bg-[#ededed]"
        />
        <button type="button" aria-label="放大" className="text-[#3b4a60]">
          <Svg w={16} h={16}>
            <path d="M0 8h16M8 0v16" strokeWidth="3" />
          </Svg>
        </button>
        <button type="button" aria-label="全屏" className="mr-6 ml-[18px]">
          <Svg w={22} h={22}>
            <path d="M1 6V1h5M1 1l6 6M16 1h5v5M21 1l-6 6M21 16v5h-5M21 21l-6-6M6 21H1v-5M1 21l6-6" />
          </Svg>
        </button>
      </div>
    </footer>
  );
}

/* ------------------------------------------------------------------ */
/* Windows task bar                                                     */
/* ------------------------------------------------------------------ */

function ExplorerLogo({ size, body, ring }: { size: number; body: string; ring: string }) {
  return (
    <svg viewBox="0 0 34 34" width={size} height={size} fill="none" aria-hidden="true" className="shrink-0">
      <path d="M29 24a11 11 0 1 1 1-5H10" stroke={body} strokeWidth="6" />
      <path d="M7 32C-3 32 3 15 14 7S35-1 32 9" stroke={ring} strokeWidth="2.500" />
    </svg>
  );
}

function CatFace({ size, bg, face }: { size: number; bg: string; face: string }) {
  return (
    <svg viewBox="0 0 36 36" width={size} height={size} aria-hidden="true" className="shrink-0">
      <circle cx="18" cy="18" r="18" fill={bg} />
      <path d="M9 5l5 4h8l5-4 2 10c0 6-5 9-11 9S7 21 7 15z" fill={face} />
      <path d="M13 23h10l3 9c-5 3-11 3-16 0z" fill={face} />
      <path d="M9 14h18v3c-1 3-6 3-7 1h-4c-1 2-6 2-7-1z" fill="#f7dcc0" />
      <path d="M11 16h5M20 16h5" stroke="#111" strokeWidth="2" />
    </svg>
  );
}

function Penguin() {
  return (
    <Svg>
      <g stroke="none">
        <ellipse cx="12" cy="13" rx="9" ry="9" fill="#0c0c0c" />
        <ellipse cx="12" cy="7" rx="6" ry="6.500" fill="#0c0c0c" />
        <ellipse cx="12" cy="17" rx="6" ry="6" fill="#fff" />
        <path d="M5 10c4 3 10 3 14 0l1 3c-5 3-11 3-16 0z" fill="#e8202a" />
        <path d="M6 13h3v5l-3-1z" fill="#e8202a" />
        <circle cx="10" cy="5" r="1.600" fill="#fff" />
        <circle cx="14" cy="5" r="1.600" fill="#fff" />
        <ellipse cx="12" cy="9" rx="3.500" ry="1.300" fill="#f7a900" />
        <ellipse cx="8" cy="23" rx="4" ry="1.500" fill="#f7a900" />
        <ellipse cx="16" cy="23" rx="4" ry="1.500" fill="#f7a900" />
      </g>
    </Svg>
  );
}

function SyncedApp() {
  return (
    <Svg>
      <rect width="24" height="24" rx="4" fill="#2396e6" stroke="none" />
      <path d="M5 7h13M8 7v7c0 5 7 5 9 1M11 4v4M15 4v3" stroke="#fff" strokeWidth="3" />
      <rect x="12" y="13" width="12" height="11" rx="2" fill="#20b040" stroke="none" />
      <path d="M15 18l2.500 3L22 16" stroke="#fff" strokeWidth="2" />
    </Svg>
  );
}

function Tray() {
  return (
    <div className="flex items-center gap-3 text-white">
      <CatFace size={24} bg="#f00808" face="#111" />
      <Svg>
        <path d="M5 1h14v9H5z" fill="#d9dde2" stroke="none" />
        <path d="M8 3h3v3H8zM13 3h3v3h-3z" fill="#3a4656" stroke="none" />
        <rect x="2" y="9" width="20" height="14" rx="3" fill="#2a97d8" stroke="none" />
        <path d="M12 11v10M9 14v2l3 2 3-2v-3" stroke="#0b4f86" />
      </Svg>
      <SyncedApp />
      <SyncedApp />
      <Svg>
        <path d="M12 1c4 2 7 2 11 2 0 9-3 16-11 20C4 19 1 12 1 3c4 0 7 0 11-2z" fill="#fff" stroke="#2b77f0" strokeWidth="2" />
        <path d="M5 7l7 5 7-5v4l-7 7-7-7z" fill="#1f6df0" stroke="none" />
      </Svg>
      <Svg className="text-[#dfe3e8]">
        <path d="M3 23C3 13 10 5 21 5M7 23c0-8 6-13 14-13M12 23c0-5 4-8 9-8" />
        <circle cx="19" cy="21" r="2" fill="currentColor" stroke="none" />
      </Svg>
      <Svg>
        <path d="M1 3l22-2v20L1 19z" strokeWidth="1.300" />
        <path d="M6 10c2-4 7-4 9-1M15 5v4h-4M6 12v4h4M6 13c2 4 6 4 8 2" />
        <circle cx="18.500" cy="18.500" r="5.500" fill="#fb980c" stroke="none" />
      </Svg>
      <Svg>
        <path d="M1 1h22v22H1z" fill="#262a2a" stroke="#111" />
        <path d="M2 12c5-7 12-7 20-3v9c-7 3-15 1-20-6z" fill="#72b000" stroke="none" />
        <path d="M6 12c3-4 8-4 10 0-3 4-7 4-10 0zM10 12c1-2 3-1 4 0" stroke="#262a2a" />
      </Svg>
      <Penguin />
      <Penguin />
      <Svg>
        <path d="M2 3v4M6 3v4M1 7h6v3c0 3-6 3-6 0zM4 12v4h4" />
        <path d="M8 7h14v11H8z" fill="#fff" />
        <path d="M23.500 10v5" />
      </Svg>
      <Svg>
        <rect x="3" width="18" height="24" rx="8" fill="#0a7cf0" stroke="none" />
        <path d="M7 8l10 8-5 4V4l5 4-10 8" strokeWidth="1.700" />
      </Svg>
      <Svg>
        <path d="M8 8V1h9v7M6 8h12v9M6 8v15h8M11 4v1M14 4v1M14 20l3 3 6-6" strokeWidth="1.300" />
      </Svg>
      <Svg>
        <circle cx="12" cy="12" r="12" fill="#12a83c" stroke="none" />
        <path d="M1 9C7 3 15 2 23 8l-1 8c-6 5-13 7-20 1z" fill="#fbd32b" stroke="none" />
        <path d="M12 6v12M6 12h12" stroke="#0a9a35" strokeWidth="4" />
      </Svg>
      <Svg>
        <path d="M1 9h4l6-6v18l-6-6H1z" strokeWidth="1.300" />
        <path d="M14 9c1 2 1 4 0 6" />
        <path d="M17 6c3 4 3 8 0 12M20 4c4 5 4 11 0 16" stroke="#8c9096" />
      </Svg>
      <span className="flex w-6 justify-center text-xl leading-6">中</span>
      <Svg className="ml-[6px]">
        <rect width="24" height="24" rx="5" fill="#3a8df6" stroke="none" />
        <circle cx="12" cy="12" r="6" stroke="#fff" strokeWidth="3" />
        <circle cx="18" cy="18" r="2" fill="#b6ef5a" stroke="none" />
      </Svg>
    </div>
  );
}

function TaskBar() {
  return (
    <div className="flex h-[60px] shrink-0 items-center bg-[linear-gradient(to_right,#222d3c_0%,#2b3847_45%,#2a3543_72%,#202020_80%)] text-white">
      <button type="button" aria-label="开始" className="ml-6">
        <Svg>
          <path d="M0 4l10-2v9H0zM11 2l13-2v11H11zM0 12h10v10L0 20zM11 12h13v12l-13-2z" fill="#fff" stroke="none" />
        </Svg>
      </button>
      <button type="button" aria-label="浏览器" className="ml-[46px]">
        <Svg w={34} h={34}>
          <g fill="#fff" stroke="#222d3c" strokeWidth="1">
            <path d="M15 1c-6-2-14 2-13 9 0 7 8 9 13 5-5-3-5-10 0-14z" />
            <path d="M33 14c1-6-3-13-10-12-7 0-9 8-5 13 3-5 11-5 15-1z" />
            <path d="M19 33c6 2 14-2 13-9 0-7-8-9-13-5 5 3 5 10 0 14z" />
            <path d="M1 20c-1 6 3 13 10 12 7 0 9-8 5-13-3 5-11 5-15 1z" />
          </g>
        </Svg>
      </button>
      <form className="ml-[22px] flex h-[43px] bg-[#efefef] text-[15px]">
        <label className="flex w-[205px] items-center pl-2">
          <ExplorerLogo size={24} body="#2f8ef0" ring="#62b2ff" />
          <Caret className="ml-1 rotate-180 text-[#999]" />
          <input
            aria-label="搜索"
            defaultValue="你会克隆去世宠物吗"
            className="ml-[7px] w-[150px] bg-transparent text-black outline-none"
          />
        </label>
        <button type="button" className="w-[70px] bg-[#2389ff] text-white">
          搜索一下
        </button>
      </form>
      <span className="ml-3 h-9 w-1 border-x border-[#4f5966]" />
      <button type="button" aria-label="Internet Explorer" className="ml-9">
        <ExplorerLogo size={34} body="#41bdf0" ring="#f3c22e" />
      </button>
      <button type="button" aria-label="360浏览器" className="ml-[42px]">
        <svg viewBox="0 0 34 34" width="34" height="34" fill="none" aria-hidden="true">
          <circle cx="17" cy="18" r="16" fill="#fff" />
          <path d="M27 23a10 10 0 1 1 1-4H10" stroke="#4bb52c" strokeWidth="6" />
          <path d="M4 30C2 24 8 12 16 7s14-5 13-1" stroke="#6ccb3a" strokeWidth="2" />
        </svg>
      </button>
      <div className="ml-[27px] flex h-full">
        <button
          type="button"
          aria-label="文件资源管理器"
          className="flex w-[61px] items-center justify-center border-b-[3px] border-[#76b9ed] pt-[3px]"
        >
          <Svg w={34} h={30}>
            <path d="M1 2h13l3 4h15v22H1z" fill="#f8cf60" stroke="none" />
            <path d="M1 2h13v4H1z" fill="#e0a526" stroke="none" />
            <path d="M6 28V16h22v12h-6v-6H12v6z" fill="#3f97dd" stroke="none" />
          </Svg>
        </button>
        <button
          type="button"
          aria-label="酷狗"
          className="ml-3.5 flex w-[61px] items-center justify-center border-b-[3px] border-[#76b9ed] pt-[3px]"
        >
          <CatFace size={36} bg="#ef7016" face="#141010" />
        </button>
        <button
          type="button"
          aria-label="WPS"
          className="ml-2 flex w-[73px] items-center justify-center border-b-[3px] border-[#76b9ed] bg-[#515c69] pt-[3px]"
        >
          <Svg w={38} h={30}>
            <path d="M1 2h8l4 17 4-17h6l-7 27h-6z" fill="#ef2b22" stroke="none" />
            <path d="M16 20l5-18h2l4 17 4-11-3-6h9l-9 27h-6l-3-13-3 13h-2z" fill="#ff5a36" stroke="none" />
          </Svg>
        </button>
      </div>

      <div className="ml-auto flex items-center">
        <div className="flex items-center">
          <div className="text-center text-lg leading-6">
            <p>21%</p>
            <p>CPU利用率</p>
          </div>
          <Svg w={34} h={26} className="-ml-5 mb-1">
            <circle cx="24" cy="9" r="9" fill="#f9a825" stroke="none" />
            <path d="M8 25a7 7 0 0 1-1-13 9 9 0 0 1 16-1 7 7 0 0 1 3 14z" fill="#d6e2f7" stroke="none" />
          </Svg>
        </div>
        <div className="ml-[26px]">
          <Tray />
        </div>
        <div className="ml-[25px] w-[92px] text-center text-lg leading-6 whitespace-nowrap">
          <p>10:16 周六</p>
          <p>2022/9/17</p>
        </div>
        <button type="button" aria-label="通知" className="relative ml-[29px] w-10 text-left">
          <Svg w={24} h={22}>
            <path d="M0 0h24v22H0z" fill="#fff" stroke="none" />
            <path d="M9 5l7 6-7 6z" fill="#222" stroke="none" />
          </Svg>
          <span className="absolute top-[11px] left-4 flex size-5 items-center justify-center bg-[#e00b0b] text-[13px] leading-none">
            1
          </span>
        </button>
        <span className="mr-1.5 ml-[3px] h-[60px] w-0.5 bg-[#6b6b6b]" />
      </div>
    </div>
  );
}

/** Narrow level gauge docked at a screen edge. */
function Gauge({ className, bars, total }: { className: string; bars: number; total: number }) {
  return (
    <div className={`absolute z-20 flex flex-col justify-end gap-px bg-[#474c5c] ${className}`}>
      {Array.from({ length: total }, (_, i) => {
        const lit = i >= total - bars;
        const low = i >= total - bars / 2;
        return (
          <span key={i} className={`h-0.5 w-full ${lit ? (low ? "bg-[#5cc48c]" : "bg-[#b5b84e]") : "bg-[#2c303c]"}`} />
        );
      })}
    </div>
  );
}

export default function App() {
  return (
    <div className={`relative flex h-screen flex-col overflow-hidden bg-[#f5f7f9] ${UI_FONT}`}>
      <TabBar />
      <MenuRow />
      <Ribbon />
      <main className="flex min-h-0 flex-1">
        <div className="flex min-w-0 flex-1 flex-col">
          <Ruler />
          <div className="flex min-h-0 flex-1 justify-center overflow-hidden pl-[37px]">
            <Page />
          </div>
        </div>
        <ScrollBar />
        <SideRail />
      </main>
      <StatusBar />
      <TaskBar />

      <div className="absolute top-2 left-px z-20 flex h-[58px] w-[9px] flex-col justify-end gap-px rounded bg-[linear-gradient(#2a3d66_63%,#6b6b6b_63%)] px-0.5 pb-1">
        {[0, 1, 2, 3].map((i) => (
          <span key={i} className="h-0.5 bg-[#5ccf6c]" />
        ))}
      </div>
      <Gauge
        className="top-[174px] right-0 h-[88px] w-[15px] rounded-l pr-px pb-2 pl-1.5"
        bars={14}
        total={26}
      />
      <div className="absolute right-0 bottom-[60px] z-20 h-[108px] w-1.5 rounded-tl bg-[#f5cf3c]" />
      <svg
        viewBox="0 0 14 20"
        width="14"
        height="20"
        className="absolute right-[65px] bottom-[289px] z-20"
        aria-hidden="true"
      >
        <path d="M1 1v15l4-4 3 7 2-1-3-7h5z" fill="#fff" stroke="#000" strokeWidth="1.200" />
      </svg>
    </div>
  );
}
